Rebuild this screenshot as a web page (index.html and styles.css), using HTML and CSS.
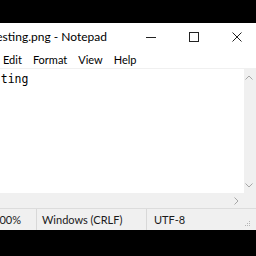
FILE: index.html
```html
<!DOCTYPE html>
<html lang="en">
<head>
    <meta charset="UTF-8">
    <title>testing.png - Notepad</title>
    <link rel="stylesheet" href="styles.css">
</head>
<body>
    <div class="window">
        <div class="title-bar">
            <div class="title">testing.png - Notepad</div>
            <div class="caption-btn">
                <svg width="10" height="10" viewBox="0 0 10 10"><path d="M0 5.5h10" stroke="#222" stroke-width="1"/></svg>
            </div>
            <div class="caption-btn">
                <svg width="10" height="10" viewBox="0 0 10 10"><rect x="0.5" y="0.5" width="9" height="9" fill="none" stroke="#222" stroke-width="1"/></svg>
            </div>
            <div class="caption-btn">
                <svg width="10" height="10" viewBox="0 0 10 10"><path d="M0.5 0.5l9 9M9.5 0.5l-9 9" stroke="#222" stroke-width="1"/></svg>
            </div>
        </div>

        <div class="menu-bar">
            <span>Edit</span>
            <span>Format</span>
            <span>View</span>
            <span>Help</span>
        </div>

        <div class="edit-area">
            <div class="text">testing</div>
            <div class="v-scroll">
                <svg width="8" height="5" viewBox="0 0 8 5"><path d="M0.5 4.5l3.5-3.5 3.5 3.5" fill="none" stroke="#a6a6a6"/></svg>
                <svg width="8" height="5" viewBox="0 0 8 5"><path d="M0.5 0.5l3.5 3.5 3.5-3.5" fill="none" stroke="#a6a6a6"/></svg>
            </div>
        </div>

        <div class="h-scroll">
            <div class="h-track"></div>
            <div class="h-arrow">
                <svg width="5" height="8" viewBox="0 0 5 8"><path d="M0.5 0.5l3.5 3.5-3.5 3.5" fill="none" stroke="#a6a6a6"/></svg>
            </div>
            <div class="corner"></div>
        </div>

        <div class="status-bar">
            <div class="part zoom">100%</div>
            <div class="part eol">Windows (CRLF)</div>
            <div class="part enc">UTF-8</div>
            <div class="grip">
                <svg width="8" height="8" viewBox="0 0 8 8" fill="#b5b5b5">
                    <rect x="6" y="2" width="1" height="1"/>
                    <rect x="4" y="4" width="1" height="1"/><rect x="6" y="4" width="1" height="1"/>
                    <rect x="2" y="6" width="1" height="1"/><rect x="4" y="6" width="1" height="1"/><rect x="6" y="6" width="1" height="1"/>
                </svg>
            </div>
        </div>
    </div>
</body>
</html>
```

FILE: styles.css
```css
* {
    margin: 0;
    padding: 0;
    box-sizing: border-box;
}

body {
    width: 256px;
    height: 256px;
    overflow: hidden;
    background: #000;
    font-family: Lato, "Noto Sans", sans-serif;
    color: #000;
}

.window {
    width: 260px;
    margin-top: 23px;
    background: #fff;
    display: flex;
    flex-direction: column;
}

/* title */
.title-bar {
    height: 27px;
    display: flex;
    align-items: center;
    background: #fff;
}

.title {
    flex: 1;
    margin-left: -8px;
    font-size: 12px;
    white-space: nowrap;
}

.caption-btn {
    width: 43px;
    height: 27px;
    display: flex;
    justify-content: center;
    align-items: center;
}

.caption-btn:last-child {
    margin-right: 2px;
}

/* menu */
.menu-bar {
    height: 18px;
    display: flex;
    align-items: center;
    gap: 11px;
    padding-left: 3px;
    font-size: 11px;
    white-space: nowrap;
}

/* editor */
.edit-area {
    height: 125px;
    display: flex;
    border-top: 1px solid #f0f0f0;
}

.text {
    flex: 1;
    margin-left: -20px;
    padding-top: 2px;
    font-family: "DejaVu Sans Mono", "Liberation Mono", monospace;
    font-size: 11.5px;
    line-height: 16px;
}

.v-scroll {
    width: 16px;
    background: #f0f0f0;
    display: flex;
    flex-direction: column;
    justify-content: space-between;
    align-items: center;
    padding: 6px 6px 5px 0;
}

.h-scroll {
    height: 15px;
    display: flex;
    background: #f0f0f0;
}

.h-track {
    flex: 1;
}

.h-arrow {
    width: 16px;
    display: flex;
    justify-content: center;
    align-items: center;
}

.corner {
    width: 16px;
    background: #f0f0f0;
}

/* status */
.status-bar {
    height: 22px;
    display: flex;
    align-items: center;
    background: #f0f0f0;
    border-top: 1px solid #dcdcdc;
    font-size: 11px;
    color: #1a1a1a;
    white-space: nowrap;
}

.part {
    height: 100%;
    display: flex;
    align-items: center;
    border-right: 1px solid #d8d8d8;
}

.zoom {
    width: 44px;
    margin-left: -7px;
}

.eol {
    width: 110px;
    padding-left: 5px;
}

.enc {
    width: 96px;
    padding-left: 7px;
    border-right: none;
}

.grip {
    flex: 1;
    height: 100%;
    display: flex;
    align-items: flex-end;
    padding: 0 0 3px 0;
}
```
